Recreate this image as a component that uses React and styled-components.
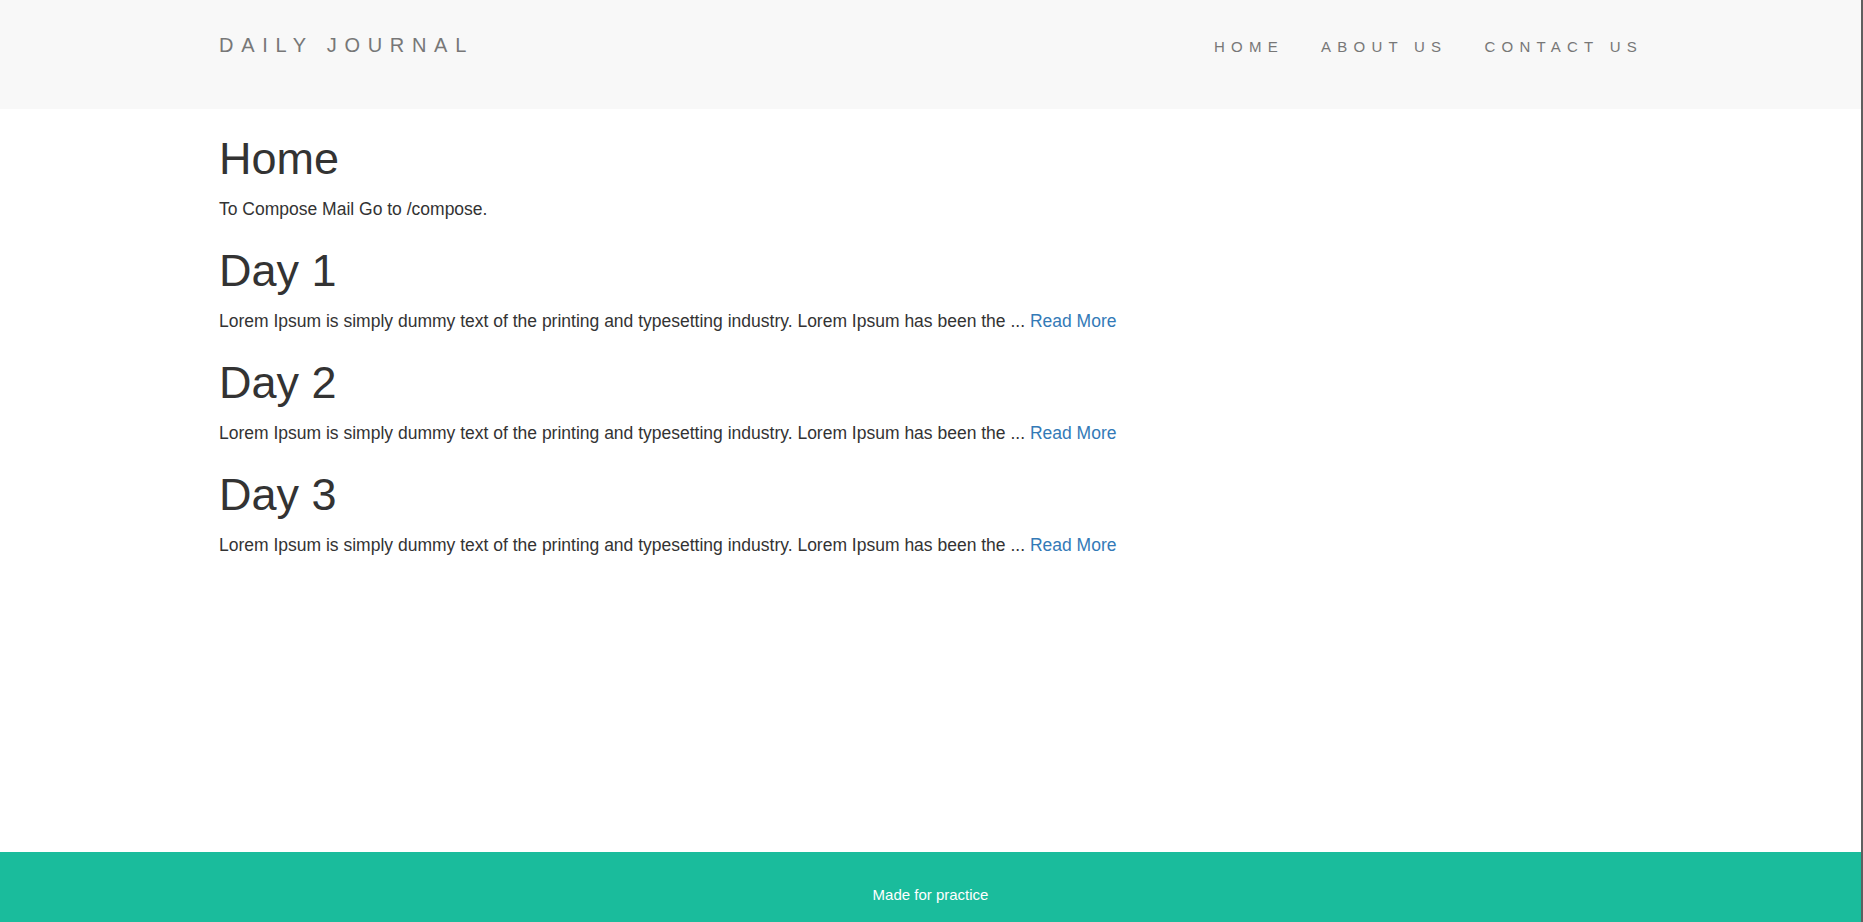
import React from "react";
import styled, { createGlobalStyle } from "styled-components";

const colors = {
  text: "#333333",
  muted: "#777777",
  navbar: "#f8f8f8",
  link: "#337ab7",
  footer: "#1abc9c",
};

const posts = [
  { id: 1, title: "Day 1" },
  { id: 2, title: "Day 2" },
  { id: 3, title: "Day 3" },
];

const excerpt =
  "Lorem Ipsum is simply dummy text of the printing and typesetting industry. Lorem Ipsum has been the ... ";

const App = () => {
  return (
    <Page>
      <GlobalStyle />
      <Navbar>
        <Brand href="#">Daily Journal</Brand>
        <NavList>
          <li><NavLink href="#">Home</NavLink></li>
          <li><NavLink href="#">About Us</NavLink></li>
          <li><NavLink href="#">Contact Us</NavLink></li>
        </NavList>
      </Navbar>

      <Main>
        <Title>Home</Title>
        <Text>To Compose Mail Go to /compose.</Text>

        {posts.map((post) => (
          <section key={post.id}>
            <Title>{post.title}</Title>
            <Text>
              {excerpt}
              <ReadMore href="#">Read More</ReadMore>
            </Text>
          </section>
        ))}
      </Main>

      <Footer>
        <p>Made for practice</p>
      </Footer>
    </Page>
  );
};

const GlobalStyle = createGlobalStyle`
    * {
        box-sizing: border-box;
    }
    html, body {
        margin: 0;
        padding: 0;
    }
    body {
        font-family: "Liberation Sans", Arial, sans-serif;
        color: ${colors.text};
        background: #ffffff;
    }
`;

const Page = styled.div`
    display: flex;
    flex-direction: column;
    min-height: 100vh;
    border-right: 2px solid #5f5f5f;
`;

const Navbar = styled.header`
    display: flex;
    align-items: baseline;
    justify-content: space-between;
    height: 109px;
    padding: 33px 218px 0 219px;
    background: ${colors.navbar};
`;

const Brand = styled.a`
    font-size: 20px;
    line-height: 24px;
    letter-spacing: 7.7px;
    text-transform: uppercase;
    text-decoration: none;
    color: ${colors.muted};
`;

const NavList = styled.ul`
    display: flex;
    gap: 37px;
    margin: 0;
    padding: 0;
    list-style: none;
`;

const NavLink = styled.a`
    font-size: 15px;
    letter-spacing: 6.25px;
    text-transform: uppercase;
    text-decoration: none;
    color: ${colors.muted};
`;

const Main = styled.main`
    flex: 1;
    padding: 0 218px 40px 219px;
`;

const Title = styled.h1`
    margin: 25px 0 13px;
    font-size: 45px;
    font-weight: 500;
    line-height: 1.1;
`;

const Text = styled.p`
    margin: 0 0 -0.5px;
    font-size: 17.5px;
    line-height: 25px;
`;

const ReadMore = styled.a`
    color: ${colors.link};
    text-decoration: none;
`;

const Footer = styled.footer`
    height: 70px;
    background: ${colors.footer};
    text-align: center;

    p {
        margin: 0;
        padding-top: 34px;
        font-size: 15px;
        line-height: 18px;
        color: #ffffff;
    }
`;

export default App;
